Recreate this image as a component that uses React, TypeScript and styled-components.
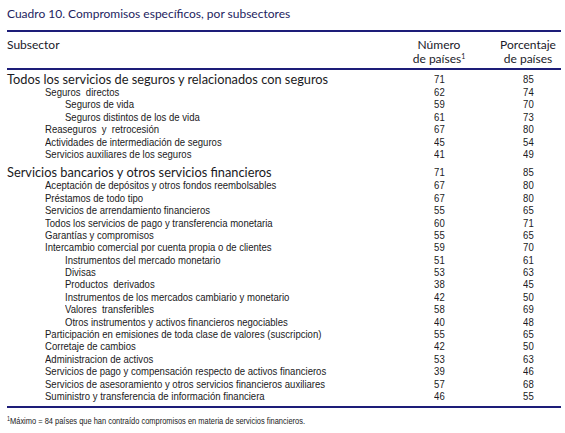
import styled, { createGlobalStyle } from "styled-components";

const GlobalStyle = createGlobalStyle`
  html, body {
    margin: 0;
    padding: 0;
    background: #ffffff;
  }
`;

type Item = { label: string; level: 0 | 1 | 2; n: number; p: number };

const sections: Item[][] = [
  [
    { label: "Todos los servicios de seguros y relacionados con seguros", level: 0, n: 71, p: 85 },
    { label: "Seguros  directos", level: 1, n: 62, p: 74 },
    { label: "Seguros de vida", level: 2, n: 59, p: 70 },
    { label: "Seguros distintos de los de vida", level: 2, n: 61, p: 73 },
    { label: "Reaseguros  y  retrocesión", level: 1, n: 67, p: 80 },
    { label: "Actividades de intermediación de seguros", level: 1, n: 45, p: 54 },
    { label: "Servicios auxiliares de los seguros", level: 1, n: 41, p: 49 },
  ],
  [
    { label: "Servicios bancarios y otros servicios financieros", level: 0, n: 71, p: 85 },
    { label: "Aceptación de depósitos y otros fondos reembolsables", level: 1, n: 67, p: 80 },
    { label: "Préstamos de todo tipo", level: 1, n: 67, p: 80 },
    { label: "Servicios de arrendamiento financieros", level: 1, n: 55, p: 65 },
    { label: "Todos los servicios de pago y transferencia monetaria", level: 1, n: 60, p: 71 },
    { label: "Garantías y compromisos", level: 1, n: 55, p: 65 },
    { label: "Intercambio comercial por cuenta propia o de clientes", level: 1, n: 59, p: 70 },
    { label: "Instrumentos del mercado monetario", level: 2, n: 51, p: 61 },
    { label: "Divisas", level: 2, n: 53, p: 63 },
    { label: "Productos  derivados", level: 2, n: 38, p: 45 },
    { label: "Instrumentos de los mercados cambiario y monetario", level: 2, n: 42, p: 50 },
    { label: "Valores  transferibles", level: 2, n: 58, p: 69 },
    { label: "Otros instrumentos y activos financieros negociables", level: 2, n: 40, p: 48 },
    { label: "Participación en emisiones de toda clase de valores (suscripcion)", level: 1, n: 55, p: 65 },
    { label: "Corretaje de cambios", level: 1, n: 42, p: 50 },
    { label: "Administracion de activos", level: 1, n: 53, p: 63 },
    { label: "Servicios de pago y compensación respecto de activos financieros", level: 1, n: 39, p: 46 },
    { label: "Servicios de asesoramiento y otros servicios financieros auxiliares", level: 1, n: 57, p: 68 },
    { label: "Suministro y transferencia de información financiera", level: 1, n: 46, p: 55 },
  ],
];

export default function App() {
  return (
    <>
      <GlobalStyle />
      <Page>
        <Title>Cuadro 10. Compromisos específicos, por subsectores</Title>
        <Table>
          <HeadRow>
            <div>Subsector</div>
            <HeadCell>
              <div>Número</div>
              <div>
                de países<sup>1</sup>
              </div>
            </HeadCell>
            <HeadCell>
              <div>Porcentaje</div>
              <div>de países</div>
            </HeadCell>
          </HeadRow>
          <Body>
            {sections.map((rows, si) => (
              <Section key={si}>
                {rows.map((r, i) => (
                  <Row key={i} $group={r.level === 0}>
                    <Label $level={r.level}>
                      {r.level === 0 ? r.label : <Narrow>{r.label}</Narrow>}
                    </Label>
                    <Num>
                      <Narrow $center>{r.n}</Narrow>
                    </Num>
                    <Num>
                      <Narrow $center>{r.p}</Narrow>
                    </Num>
                  </Row>
                ))}
              </Section>
            ))}
          </Body>
        </Table>
        <Footnote>
          <Narrow>
            <sup>1</sup>Máximo = 84 países que han contraído compromisos en materia de servicios financieros.
          </Narrow>
        </Footnote>
      </Page>
    </>
  );
}

const rule = "#1d1d78";
const sans = `"Liberation Sans", Arial, sans-serif`;
const humanist = `Lato, "Open Sans", sans-serif`;

const Page = styled.div`
  width: 565px;
  height: 433px;
  box-sizing: border-box;
  padding: 6px 4px 0 7px;
`;

const Title = styled.div`
  font-family: ${humanist};
  font-size: 12px;
  line-height: 16px;
  color: #1d2360;
  height: 24px;
`;

const Table = styled.div`
  border-top: 2px solid ${rule};
  border-bottom: 2px solid ${rule};
`;

const HeadRow = styled.div`
  display: grid;
  grid-template-columns: minmax(0, 1fr) 84px 66px;
  column-gap: 14px;
  padding: 6px 0 2px;
  border-bottom: 2px solid ${rule};
  font-family: ${humanist};
  font-size: 12px;
  line-height: 14px;
  color: #1a1a2a;

  sup {
    font-size: 7px;
    line-height: 0;
    vertical-align: 4px;
  }
`;

const HeadCell = styled.div`
  text-align: center;
`;

const Body = styled.div`
  padding: 3px 0 4px;
`;

const Section = styled.div`
  & + & {
    margin-top: 6px;
  }
`;

const Row = styled.div<{ $group: boolean }>`
  display: grid;
  grid-template-columns: minmax(0, 1fr) 84px 66px;
  column-gap: 14px;
  height: ${(p) => (p.$group ? "13px" : "12.4px")};
  line-height: ${(p) => (p.$group ? "13px" : "12.4px")};
  color: #1a1a22;
  white-space: pre;
`;

const Label = styled.div<{ $level: number }>`
  min-width: 0;
  padding-left: ${(p) => (p.$level === 0 ? 0 : p.$level === 1 ? 38 : 58)}px;
  font-family: ${(p) => (p.$level === 0 ? humanist : sans)};
  font-size: ${(p) => (p.$level === 0 ? "12.8px" : "11.5px")};
`;

const Narrow = styled.span<{ $center?: boolean }>`
  display: inline-block;
  transform: scaleX(0.83);
  transform-origin: ${(p) => (p.$center ? "center" : "left")} center;
`;

const Num = styled.div`
  text-align: center;
  font-family: ${sans};
  font-size: 11.5px;
`;

const Footnote = styled.div`
  margin-top: 8px;
  font-family: ${sans};
  font-size: 9px;
  color: #1a1a22;
  white-space: pre;

  sup {
    font-size: 6.5px;
    line-height: 0;
    vertical-align: 3px;
  }
`;
